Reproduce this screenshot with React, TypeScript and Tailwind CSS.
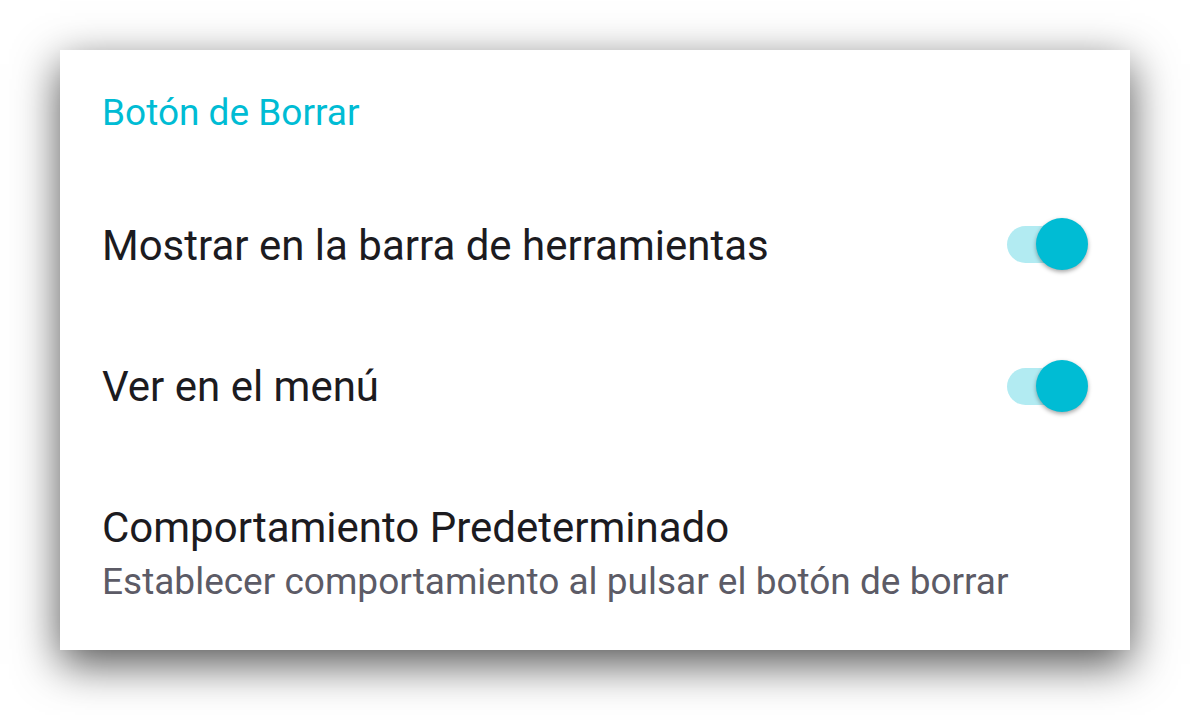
import React from "react";

function Toggle() {
  return (
    <div className="relative w-[82px] h-[52px] flex items-center">
      <div className="ml-[1px] w-[74px] h-[37px] rounded-full bg-[#b2ebf2]" />
      <div className="absolute right-0 top-0 w-[52px] h-[52px] rounded-full bg-[#00bcd4] shadow-[0_2px_4px_rgba(0,0,0,0.35)]" />
    </div>
  );
}

export default function App() {
  return (
    <div className="w-[1190px] h-[720px] bg-white overflow-hidden pt-[50px] pl-[60px]" style={{ fontFamily: "Roboto, 'Noto Sans', sans-serif" }}>
      <div className="w-[1070px] h-[600px] bg-white shadow-[0_14px_42px_rgba(0,0,0,0.68)] flex flex-col pl-[42px] pr-[42px]">
        <div className="h-[124px] flex items-center text-[#00bcd4] text-[37px] leading-none">Botón de Borrar</div>
        <div className="h-[140px] flex items-center justify-between">
          <span className="text-[#1c1b1f] text-[42px] leading-none pt-[3px]">Mostrar en la barra de herramientas</span>
          <Toggle />
        </div>
        <div className="h-[144px] flex items-center justify-between">
          <span className="text-[#1c1b1f] text-[42px] leading-none pt-[2px]">Ver en el menú</span>
          <Toggle />
        </div>
        <div className="flex flex-col pt-[43px]">
          <span className="text-[#1c1b1f] text-[42px] leading-[54px]">Comportamiento Predeterminado</span>
          <span className="text-[#5c5b66] text-[37px] leading-[54px]">Establecer comportamiento al pulsar el botón de borrar</span>
        </div>
      </div>
    </div>
  );
}
